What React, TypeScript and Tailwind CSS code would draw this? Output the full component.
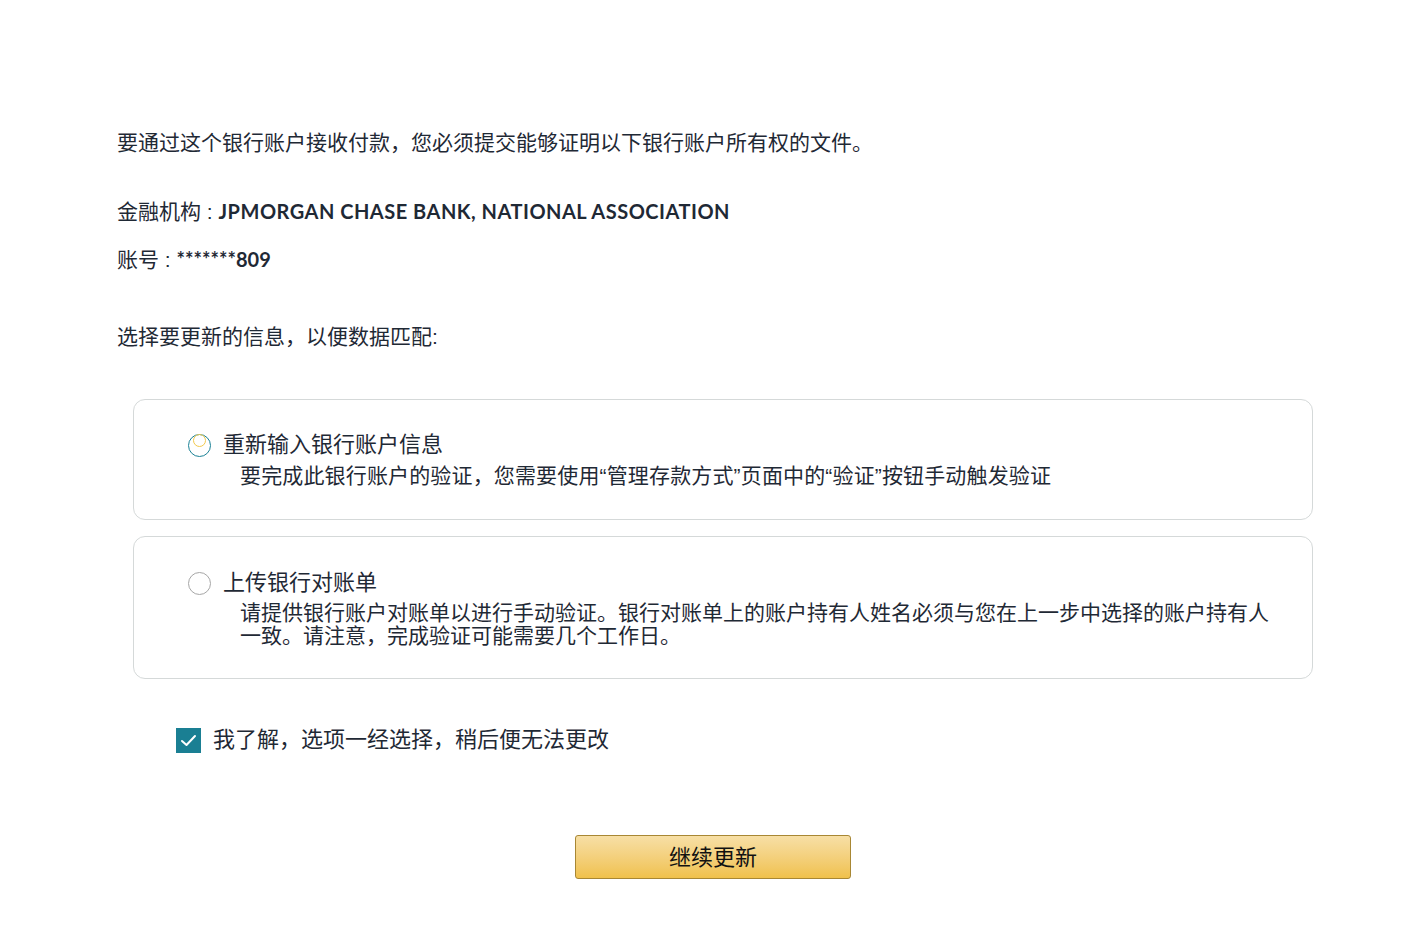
import React from "react";

const cjk = { fontFamily: '"Liberation Sans","Noto Sans CJK SC",sans-serif' };
const latin = { fontFamily: 'Lato,"Noto Sans CJK SC",sans-serif' };

export default function App() {
  return (
    <div className="min-h-[944px] w-[1412px] bg-white text-[#1f2935]" style={cjk}>
      <div className="flex flex-col pl-[117px] pt-[130px]">
        <p className="text-[21px] leading-[26px]">要通过这个银行账户接收付款，您必须提交能够证明以下银行账户所有权的文件。</p>
        <p className="mt-[43px] h-[26px] text-[21px] leading-[26px]">
          金融机构 :{" "}
          <span className="font-bold text-[20px] leading-[18px] tracking-[0.5px]" style={latin}>
            JPMORGAN CHASE BANK, NATIONAL ASSOCIATION
          </span>
        </p>
        <p className="mt-[22px] h-[26px] text-[21px] leading-[26px]">
          账号 :{" "}
          <span className="font-bold text-[20px] leading-[18px]" style={latin}>
            *******809
          </span>
        </p>
        <p className="mt-[51px] text-[21px] leading-[26px]">选择要更新的信息，以便数据匹配:</p>

        <div className="ml-[16px] mt-[49px] w-[1180px] rounded-[12px] border border-[#d5d9d9] pb-[31px] pl-[54px] pr-[40px] pt-[31px]">
          <div className="flex items-center">
            <div className="relative h-[23px] w-[23px] shrink-0 rounded-full border-[1.5px] border-[#1b8296]">
              <div className="absolute left-[4px] top-[-1px] h-[13px] w-[13px] rounded-full border-[1.5px] border-[#f2c94c]" />
            </div>
            <span className="ml-[12px] text-[22px] leading-[28px]">重新输入银行账户信息</span>
          </div>
          <p className="ml-[52px] mt-[5px] text-[21px] leading-[24px] tracking-[0.15px]">要完成此银行账户的验证，您需要使用“管理存款方式”页面中的“验证”按钮手动触发验证</p>
        </div>

        <div className="ml-[16px] mt-[16px] w-[1180px] rounded-[12px] border border-[#d5d9d9] pb-[31px] pl-[54px] pr-[40px] pt-[32px]">
          <div className="flex items-center">
            <div className="h-[23px] w-[23px] shrink-0 rounded-full border-[1.5px] border-[#a6a6a6]" />
            <span className="ml-[12px] text-[22px] leading-[28px]">上传银行对账单</span>
          </div>
          <p className="ml-[52px] mt-[4px] text-[21px] leading-[23px]">请提供银行账户对账单以进行手动验证。银行对账单上的账户持有人姓名必须与您在上一步中选择的账户持有人一致。请注意，完成验证可能需要几个工作日。</p>
        </div>

        <div className="ml-[59px] mt-[47px] flex items-center">
          <div className="flex h-[25px] w-[25px] items-center justify-center bg-[#1a7f93]">
            <svg width="17" height="13" viewBox="0 0 17 13" fill="none">
              <path d="M2 7 L6.5 11 L15 2" stroke="white" strokeWidth="2" strokeLinecap="round" strokeLinejoin="round" />
            </svg>
          </div>
          <span className="ml-[12px] text-[22px] leading-[28px]">我了解，选项一经选择，稍后便无法更改</span>
        </div>

        <button className="ml-[458px] mt-[81px] flex h-[44px] w-[276px] items-center justify-center rounded-[3px] border border-[#a88734] bg-gradient-to-b from-[#f7dfa5] to-[#f0c14b] text-[22px] text-[#111111]">
          继续更新
        </button>
      </div>
    </div>
  );
}
